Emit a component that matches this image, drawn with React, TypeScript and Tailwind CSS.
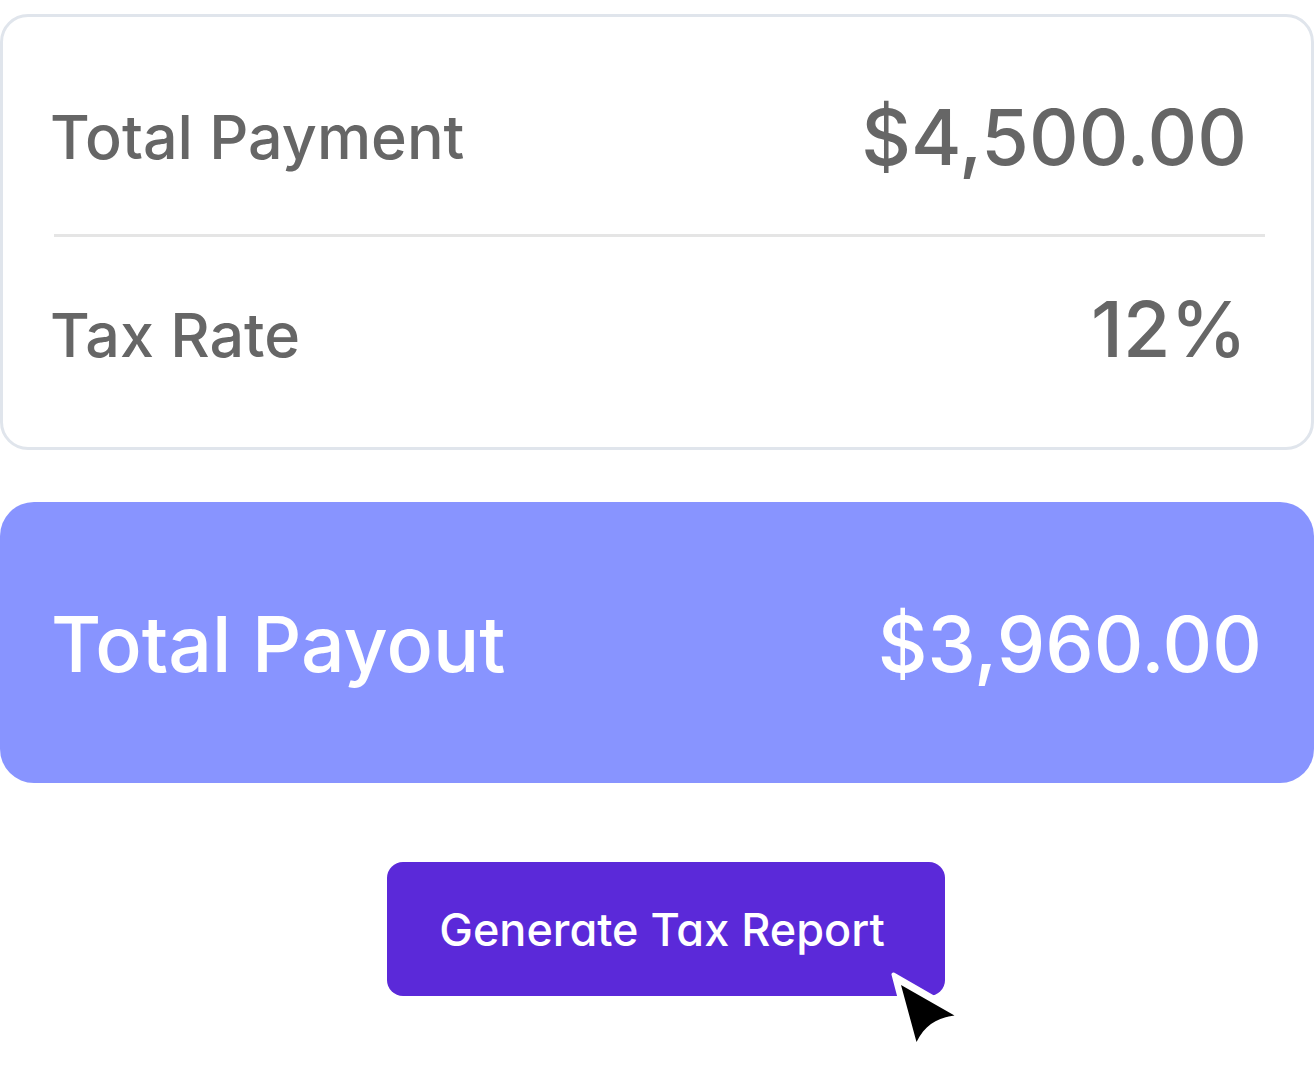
import React from 'react';
import { clsx } from 'clsx';

interface SummaryRowProps {
    label: string;
    value: string;
    className?: string;
}

const SummaryRow: React.FC<SummaryRowProps> = ({ label, value, className }) => (
    <div className={clsx("flex justify-between pl-[47px] pr-16 leading-none", className)}>
        <p className="text-[61px] leading-none">{label}</p>
        <p className="text-[77px] leading-none">{value}</p>
    </div>
);

const Pointer: React.FC = () => (
    <svg
        aria-hidden="true"
        viewBox="0 0 92 96"
        className="pointer-events-none absolute left-full top-full -ml-[60px] -mt-[31px] h-[96px] w-[92px]"
    >
        {/* White halo behind the arrow */}
        <path
            d="M8.5 9.5 L78 49.5 L28 84 Z"
            fill="#ffffff"
            stroke="#ffffff"
            strokeWidth="4"
            strokeLinejoin="round"
        />
        <path d="M16 20 L69.5 50.5 C52 53 40 60 31.5 77 Z" fill="#000000" />
    </svg>
);

const App: React.FC = () => {
    return (
        <main className="bg-white pt-3.5 pb-[75px] font-['Inter',sans-serif] font-medium">
            <section className="rounded-[28px] border-3 border-[#e0e5ec] text-[#666666]">
                <SummaryRow label="Total Payment" value="$4,500.00" className="h-[217px] items-center pt-6" />
                <hr className="ml-[51px] mr-[46px] border-t-3 border-[#e5e5e5]" />
                <SummaryRow label="Tax Rate" value="12%" className="h-[210px] items-baseline pt-[54px]" />
            </section>

            <section className="mt-[52px] flex h-[281px] items-center justify-between rounded-[34px] bg-[#8894ff] pl-[51px] pr-[52px] pt-1 text-[77px] leading-none text-white">
                <h2>Total Payout</h2>
                <p>$3,960.00</p>
            </section>

            <div className="mt-[79px] flex justify-center pl-[18px]">
                <div className="relative">
                    <button
                        type="button"
                        className="h-[134px] w-[558px] rounded-2xl bg-[#5b29d9] pr-2 text-[45px] leading-none text-white [font-feature-settings:'cv11']"
                    >
                        Generate Tax Report
                    </button>
                    <Pointer />
                </div>
            </div>
        </main>
    );
};

export default App;
